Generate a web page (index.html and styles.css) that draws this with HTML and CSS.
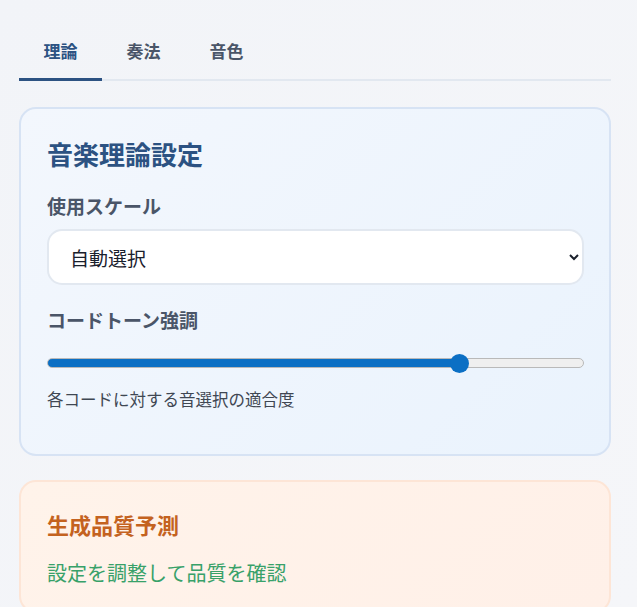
FILE: index.html
```html
<!DOCTYPE html>
<html lang="ja">
<head>
<meta charset="utf-8">
<link rel="stylesheet" href="styles.css">
</head>
<body>
<div class="page">
  <nav class="tabs">
    <button class="tab active">理論</button>
    <button class="tab">奏法</button>
    <button class="tab">音色</button>
  </nav>

  <section class="card theory">
    <h2 class="card-title">音楽理論設定</h2>
    <div class="field">
      <label class="field-label" for="scale">使用スケール</label>
      <select id="scale" class="select">
        <option>自動選択</option>
      </select>
    </div>
    <div class="field">
      <label class="field-label" for="tone">コードトーン強調</label>
      <input id="tone" class="range" type="range" min="0" max="1" step="0.005" value="0.78" style="--fill: 76.5%">
      <p class="hint">各コードに対する音選択の適合度</p>
    </div>
  </section>

  <section class="card quality">
    <h3 class="quality-title">生成品質予測</h3>
    <p class="quality-text">設定を調整して品質を確認</p>
  </section>
</div>
</body>
</html>
```
FILE: styles.css
```css
* { box-sizing: border-box; }
html, body { margin: 0; height: 100%; }
body {
  font-family: "Noto Sans CJK JP", "Noto Sans", sans-serif;
  background: linear-gradient(135deg, #f2f4f8 0%, #f5f6f9 100%);
  color: #2d3748;
}
.page {
  padding: 31px 26px 0 19px;
}
.tabs {
  display: flex;
  border-bottom: 2px solid #e2e8f0;
}
.tab {
  width: 83px;
  padding: 8px 0 15px;
  border: none;
  background: none;
  font-family: inherit;
  font-size: 17px;
  line-height: 24px;
  font-weight: 700;
  color: #4a5568;
  border-bottom: 3px solid transparent;
  margin-bottom: -2px;
}
.tab.active {
  color: #2c5282;
  border-bottom-color: #2c5282;
}
.card {
  border-radius: 17px;
  border: 2px solid #d7e3f4;
}
.theory {
  margin-top: 26px;
  padding: 26px 25px 22px 26px;
  background: linear-gradient(135deg, #f3f7fd 0%, #eaf3fd 100%);
}
.card-title {
  margin: 0 0 19px;
  font-size: 26px;
  line-height: 38px;
  font-weight: 700;
  color: #2c5282;
}
.field { margin-bottom: 21px; }
.field-label {
  display: block;
  font-size: 19px;
  line-height: 28px;
  font-weight: 700;
  color: #4a5568;
  margin-bottom: 9px;
}
.select {
  display: block;
  width: 100%;
  height: 56px;
  padding: 0 20px 0 17px;
  font-family: inherit;
  font-size: 19px;
  color: #1a202c;
  background: #fff;
  border: 2px solid #e2e8f0;
  border-radius: 15px;
}
.range {
  -webkit-appearance: none;
  appearance: none;
  display: block;
  width: 100%;
  height: 10px;
  margin: 24px 0 19px;
  border-radius: 5px;
  border: 1px solid #b9b9b9;
  background: linear-gradient(to right, #0b6fc4 0, #0b6fc4 var(--fill), #efefef var(--fill), #efefef 100%);
  background-origin: border-box;
  outline: none;
}
.range::-webkit-slider-thumb {
  -webkit-appearance: none;
  appearance: none;
  width: 19px;
  height: 19px;
  border-radius: 50%;
  background: #0b6fc4;
  border: none;
}
.hint {
  margin: 0;
  font-size: 16.5px;
  line-height: 24px;
  color: #3f4753;
}
.quality {
  margin-top: 24px;
  padding: 26px 25px 24px 26px;
  background: linear-gradient(135deg, #fff3ea 0%, #fff0e8 100%);
  border-color: #fde5d6;
}
.quality-title {
  margin: 0 0 18px;
  font-size: 22px;
  line-height: 32px;
  font-weight: 700;
  color: #c4621f;
}
.quality-text {
  margin: 0;
  font-size: 20px;
  line-height: 29px;
  color: #38a169;
}
```
